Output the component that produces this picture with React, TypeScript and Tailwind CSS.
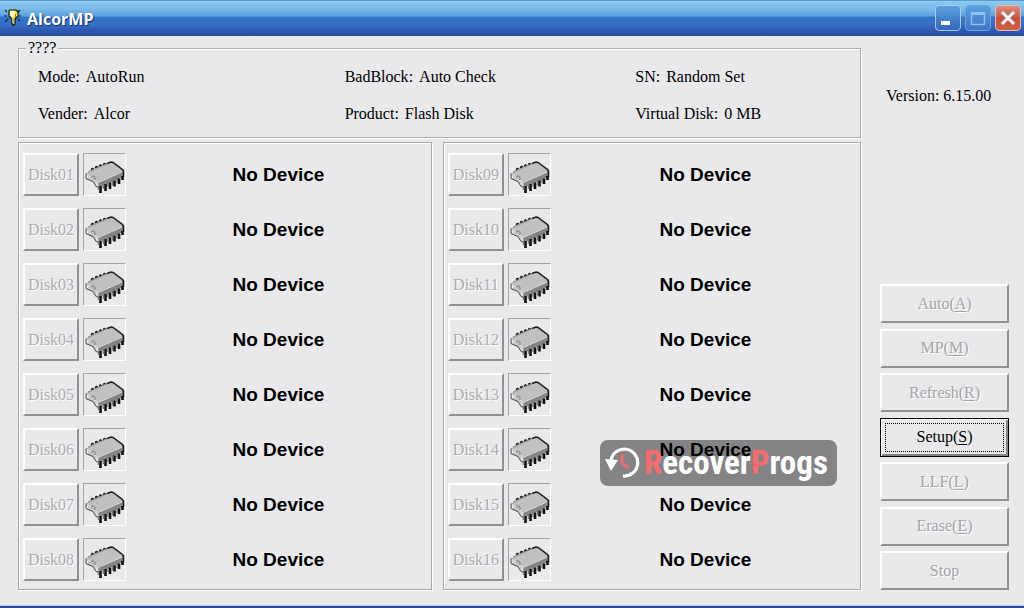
import type { ReactNode } from 'react'

const LEFT_DISKS = ['Disk01', 'Disk02', 'Disk03', 'Disk04', 'Disk05', 'Disk06', 'Disk07', 'Disk08']
const RIGHT_DISKS = ['Disk09', 'Disk10', 'Disk11', 'Disk12', 'Disk13', 'Disk14', 'Disk15', 'Disk16']

const INFO = [
  { label: 'Mode', value: 'AutoRun' },
  { label: 'BadBlock', value: 'Auto Check' },
  { label: 'SN', value: 'Random Set' },
  { label: 'Vender', value: 'Alcor' },
  { label: 'Product', value: 'Flash Disk' },
  { label: 'Virtual Disk', value: '0 MB' },
]

type Action = { text: string; hotkey?: string; enabled?: boolean }

const ACTIONS: Action[] = [
  { text: 'Auto', hotkey: 'A' },
  { text: 'MP', hotkey: 'M' },
  { text: 'Refresh', hotkey: 'R' },
  { text: 'Setup', hotkey: 'S', enabled: true },
  { text: 'LLF', hotkey: 'L' },
  { text: 'Erase', hotkey: 'E' },
  { text: 'Stop' },
]

function BulbIcon() {
  return (
    <svg width="18" height="20" viewBox="0 0 18 20" aria-hidden="true">
      <path d="M1 2l2 2M0 8h3M1 14l3-3M14 4l2-2M15 8h2M14 11l2 2" stroke="#14254d" strokeWidth="1.2" />
      <path d="M5 3l1-1h6l2 2v4l-3 3v5l-1.500 1.500L8 16v-5L5 8z" fill="#f4f23a" stroke="#16160c" strokeWidth="1.2" />
      <path d="M6 4l2-1h2v3l-1 5v4H8.500v-5L6 7z" fill="#fffde0" />
      <path d="M11.500 6v3l-1.500 2v5" stroke="#8c8a25" fill="none" />
    </svg>
  )
}

// DIP chip seen from the front-right corner
function ChipIcon() {
  return (
    <svg width="41" height="41" viewBox="1 1 41 41" aria-hidden="true">
      <path d="M8 17l1-2 2 1zM12 15l1-2 2 1zM16 13.500l1-2 2 1zM20 12l1-2 2 1z" fill="#222" stroke="#222" strokeWidth="1" />
      <path d="M3 20.500L28 9.500l12 8V24L16 34.500l-3-1-3-4.500-7-3z" fill="#858585" />
      <path d="M3 21L28 9.500 40 18 15 29z" fill="#c0c0c0" />
      <path d="M3 21l12 8 1 5.500-3-1-3-5-7-3z" fill="#c9c9c9" />
      <path d="M24 10.500l4-1.500 2 .5 9.500 7 1 1.500V24" stroke="#1c1c1c" fill="none" strokeWidth="1.500" />
      <path d="M3 20.500v5l7 3 3 5 3 1" stroke="#555" fill="none" />
      <path d="M5 19L24 10.500" stroke="#8a8a8a" fill="none" />
      <path d="M4 21.500l4 2.500M12 27l3 2.500 24-10.500" stroke="#e6e6e6" fill="none" />
      <path d="M8 24q2-2.500 4 0v3" fill="none" stroke="#808080" />
      <path d="M4.500 23v2M14 30v2" stroke="#fafafa" />
      <path d="M17.500 33V40M22.500 31v7M27 29.500V36M31.500 27.500v6M36 25.500V31M39.500 23v4" stroke="#101010" strokeWidth="2.600" />
      <path d="M15.500 33v4M20.500 31v5M25 29v5M29.500 27.500v5M34 25.500v4.500" stroke="#7b7b7b" strokeWidth="1.500" />
    </svg>
  )
}

function CaptionButton({ title, className, children }: { title: string; className: string; children: ReactNode }) {
  return (
    <button
      type="button"
      aria-label={title}
      className={`flex h-[26px] w-[26px] items-center justify-center rounded-[4px] border ${className}`}
    >
      {children}
    </button>
  )
}

function TitleBar() {
  return (
    <header className="flex h-9 items-center bg-[linear-gradient(180deg,#3f7fb8_0%,#8ccaf0_4%,#7ab9e9_25%,#5ba1df_44%,#2f76c9_48%,#376fc6_68%,#2c54ac_88%,#2a4b9f_100%)] pl-1 pr-[3px]">
      <BulbIcon />
      <h1 className="ml-[5px] flex-1 pt-[2px] font-['Open_Sans',sans-serif] text-base font-bold leading-5 text-white [text-shadow:1px_1px_1px_#12306e]">
        AlcorMP
      </h1>
      <div className="flex gap-1">
        <CaptionButton title="Minimize" className="border-[#a7cdf2] bg-linear-to-b from-[#5b9ede] to-[#3468bc]">
          <svg width="24" height="24" viewBox="0 0 24 24" aria-hidden="true">
            <path d="M5 15h9v4H5z" fill="#fff" />
          </svg>
        </CaptionButton>
        <CaptionButton title="Maximize" className="border-[#6ea6df] bg-linear-to-b from-[#5b9ede] to-[#4176c2]">
          <svg width="24" height="24" viewBox="0 0 24 24" aria-hidden="true">
            <path d="M5.500 7.500h13v11h-13z" fill="none" stroke="#8fc1f2" strokeWidth="1.500" />
            <path d="M5 6h14v3H5z" fill="#8fc1f2" />
          </svg>
        </CaptionButton>
        <CaptionButton title="Close" className="border-[#e9b9b4] bg-linear-to-b from-[#dc8c7c] via-[#c8533b] to-[#cf5f43]">
          <svg width="24" height="24" viewBox="0 0 24 24" aria-hidden="true">
            <path d="M6 6l12 12M18 6L6 18" stroke="#fff" strokeWidth="3" />
          </svg>
        </CaptionButton>
      </div>
    </header>
  )
}

function InfoGroup() {
  return (
    <fieldset className="min-w-0 border border-[#adadaf] pb-[5px] pl-[19px] shadow-[inset_1px_1px_0_#fff,1px_1px_0_#fff]">
      <legend className="-ml-3 bg-[#e9e8eb] px-[2px] text-base leading-[18px]">????</legend>
      <dl className="grid grid-cols-[307fr_291fr_225fr] pt-px text-base leading-[37px]">
        {INFO.map(({ label, value }) => (
          <div key={label} className="flex gap-[6px] whitespace-nowrap">
            <dt>{label}:</dt>
            <dd>{value}</dd>
          </div>
        ))}
      </dl>
    </fieldset>
  )
}

function DiskRow({ name }: { name: string }) {
  return (
    <li className="flex h-[55px] items-center">
      <button
        type="button"
        disabled
        className="h-[43px] w-14 border-2 border-b-[#919193] border-l-white border-r-[#919193] border-t-white text-base leading-5 text-[#adadaf] [text-shadow:1px_1px_0_#fff]"
      >
        {name}
      </button>
      <span className="ml-1 flex h-[43px] w-[43px] items-center justify-center border border-b-white border-l-[#a4a4a6] border-r-white border-t-[#a4a4a6]">
        <ChipIcon />
      </span>
      <span className="flex-1 text-center font-['Liberation_Sans',Arial,sans-serif] text-[19px] font-bold leading-6">
        No Device
      </span>
    </li>
  )
}

function DiskPanel({ disks }: { disks: string[] }) {
  return (
    <ul className="border border-[#a9a9ab] pb-[2px] pl-1 pt-1 shadow-[inset_1px_1px_0_#fff,1px_1px_0_#fff]">
      {disks.map(name => (
        <DiskRow key={name} name={name} />
      ))}
    </ul>
  )
}

function ActionButton({ text, hotkey, enabled }: Action) {
  const label = (
    <>
      {text}
      {hotkey && <>(<u className="underline-offset-2">{hotkey}</u>)</>}
    </>
  )
  if (enabled) {
    return (
      <button
        type="button"
        className="h-[39px] border border-black p-1 text-base leading-5 shadow-[inset_1px_1px_0_#fff,inset_-2px_-2px_0_#88888a]"
      >
        <span className="flex h-full items-center justify-center border border-dotted border-black">
          <span>{label}</span>
        </span>
      </button>
    )
  }
  return (
    <button
      type="button"
      disabled
      className="h-[39px] border-2 border-b-[#919193] border-l-white border-r-[#919193] border-t-white text-base leading-5 text-[#a4a4a6] [text-shadow:1px_1px_0_#fff]"
    >
      {label}
    </button>
  )
}

function Watermark() {
  return (
    <div className="absolute bottom-[104px] right-6 flex h-[46px] w-[237px] items-center rounded-lg bg-black/43 pl-[5px]">
      <svg width="35" height="34" viewBox="0 0 35 34" aria-hidden="true">
        <path d="M6 14a13.500 13.500 0 1 1 12 16" fill="none" stroke="#fff" strokeWidth="3.200" />
        <path d="M0 13l13 1-7 11z" fill="#fff" />
        <path d="M17 8v9l7 5" fill="none" stroke="#f26d6d" strokeWidth="3" />
      </svg>
      <span className="ml-1 font-['Liberation_Sans_Narrow','Roboto_Condensed',sans-serif] text-[33px] font-bold leading-10 text-white">
        <span className="text-[#f96b6b]">R</span>ecover<span className="text-[#f96b6b]">P</span>rogs
      </span>
    </div>
  )
}

export default function App() {
  return (
    <div className="flex min-h-screen flex-col border-b-2 border-[#34498b] bg-[#e9e8eb] font-['Liberation_Serif','Times_New_Roman',serif] text-black">
      <TitleBar />
      <main className="flex flex-1 items-start gap-[19px] border-b border-[#b9ccf4] pb-[15px] pl-[18px] pr-[15px] pt-[3px]">
        <div className="relative flex min-w-0 flex-1 flex-col gap-1">
          <InfoGroup />
          <div className="grid grid-cols-[99fr_100fr] gap-[11px]">
            <DiskPanel disks={LEFT_DISKS} />
            <DiskPanel disks={RIGHT_DISKS} />
          </div>
          <Watermark />
        </div>
        <aside className="flex w-[129px] flex-col justify-between self-stretch">
          <p className="pl-[6px] pt-[47px] text-base leading-5">Version: 6.15.00</p>
          <div className="flex h-[306px] flex-col justify-between">
            {ACTIONS.map(action => (
              <ActionButton key={action.text} {...action} />
            ))}
          </div>
        </aside>
      </main>
    </div>
  )
}
